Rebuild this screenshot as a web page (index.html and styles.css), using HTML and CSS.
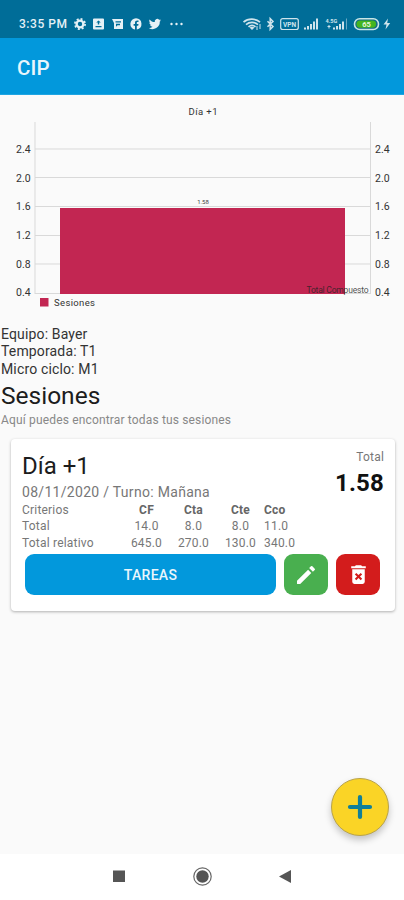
FILE: index.html
```html
<!DOCTYPE html>
<html lang="es">
<head>
    <meta charset="UTF-8">
    <meta name="viewport" content="width=device-width, initial-scale=1">
    <link rel="stylesheet" href="styles.css">
    <title>CIP</title>
</head>
<body>
<div id="statusbar">
    <span class="clock">3:35 PM</span>
    <svg class="notifications" width="112" height="14" viewBox="0 0 112 14" fill="#e6f1f6">
        <!-- ajustes -->
        <circle cx="6" cy="7" r="3.4" fill="none" stroke="#e6f1f6" stroke-width="2.4"/>
        <circle cx="6" cy="7" r="5.1" fill="none" stroke="#e6f1f6" stroke-width="1.7" stroke-dasharray="2 2"/>
        <path fill-rule="evenodd" d="M20 1.5h9a1 1 0 0 1 1 1v9a1 1 0 0 1-1 1h-9a1 1 0 0 1-1-1v-9a1 1 0 0 1 1-1zM24.5 3.4l-2.3 2.2h1.6v2h1.4v-2h1.6zM21.5 9v1.2h6V9z"/>
        <path fill-rule="evenodd" d="M38 2h11v10h-9V6zM41.500 4.300v1.200h5.500V4.300zM42 6.800v3l1.500-1.500H46V6.800z"/>
        <!-- facebook -->
        <path d="M62 1.300a5.700 5.700 0 0 0-1 11.300V8.700h-1.400V7H61V5.800c0-1.600.9-2.400 2.300-2.400h1.200v1.500h-.8c-.7 0-.9.400-.9.900V7h1.700l-.3 1.700h-1.400v3.900A5.700 5.700 0 0 0 62 1.300z"/>
        <!-- twitter -->
        <path d="M87 3.200c-.5.200-.9.300-1.400.4.500-.3.900-.8 1.100-1.400-.5.300-1 .5-1.600.6a2.500 2.500 0 0 0-4.300 2.300c-2.100-.1-4-1.100-5.200-2.700-.7 1.200-.3 2.600.8 3.400-.4 0-.8-.1-1.100-.3 0 1.200.8 2.200 2 2.500-.4.100-.8.100-1.100 0 .3 1 1.200 1.700 2.300 1.800A5.100 5.100 0 0 1 74.800 11a7.200 7.200 0 0 0 11-6.400c.5-.4.900-.8 1.200-1.400z"/>
        <circle cx="97.500" cy="7" r="1.200"/>
        <circle cx="102.500" cy="7" r="1.200"/>
        <circle cx="107.500" cy="7" r="1.200"/>
    </svg>
    <svg class="system" width="150" height="16" viewBox="0 0 150 16" fill="#cfe4ec">
        <!-- wifi -->
        <g fill="none" stroke="#cfe4ec" stroke-width="1.700">
            <path d="M-.5 6.200c4.500-4 12-4 16.500 0M2 8.600c3.500-2.900 8.500-2.900 12 0M4.500 10.800c2.200-1.700 4.800-1.700 7 0"/>
            <path d="M13 10v4M16 8v5" stroke-width="1"/>
        </g>
        <path d="M5.500 11.500L8 14l2.500-2.500c-1.500-1-3.500-1-5 0z"/>
        <!-- bluetooth -->
        <path d="M23.500 5.200l5.500 5.400-2.800 2.800V2.600L29 5.400l-5.500 5.400" fill="none" stroke="#cfe4ec" stroke-width="1.500"/>
        <!-- vpn -->
        <rect x="36.700" y="2.700" width="17.600" height="10.800" rx="2" fill="none" stroke="#cfe4ec" stroke-width="1.200"/>
        <text class="vpn" x="45.500" y="10.600" text-anchor="middle">VPN</text>
        <path d="M60 11.500h2v2h-2zM63 10h2v3.500h-2zM66 8h2v5.500h-2zM69 5.500h2v8h-2zM72 2.500h2v11h-2z"/>
        <!-- datos -->
        <text class="net" x="81.500" y="6.500">4.5G</text>
        <path d="M85 9v3.500M83.500 10.500h3" stroke="#cfe4ec"/>
        <path d="M89 11.500h2v2h-2zM92 10h2v3.500h-2zM95 8h2v5.500h-2zM98 5.500h2v8h-2z"/>
        <path d="M102 2.500h1v11h-1z" opacity=".5"/>
        <!-- bateria -->
        <rect x="110.500" y="2.700" width="24" height="10.800" rx="5.200" fill="#116983" stroke="#c9e6e6" stroke-width="1.600"/>
        <path d="M116 4.500h12.500a3.600 3.600 0 0 1 0 7.200H116a3.600 3.600 0 0 1 0-7.200z" fill="#43b51f"/>
        <text class="charge" x="122.500" y="11" text-anchor="middle">65</text>
        <path d="M144 2.500l-4.500 6h3l-1 5 4.700-6.500h-3z"/>
    </svg>
</div>

<header id="toolbar">CIP</header>

<main id="main">
    <svg id="chart" width="404" height="220" viewBox="0 0 404 220">
        <text class="label" x="188.500" y="20" textLength="29">Día +1</text>
        <g class="grid">
            <path d="M35 54h336M35 82.500h336M35 111.500h336M35 140.500h336M35 169h336M35 198.500h336"/>
            <path d="M35 27v172M370.500 27v172"/>
        </g>
        <rect class="bar" x="60" y="113" width="285" height="86"/>
        <text class="value" x="203" y="108.500" text-anchor="middle">1.58</text>
        <g class="axis">
            <text x="16" y="57.500">2.4</text>
            <text x="16" y="86.500">2.0</text>
            <text x="16" y="115">1.6</text>
            <text x="16" y="144">1.2</text>
            <text x="16" y="172.500">0.8</text>
            <text x="16" y="201">0.4</text>
            <text x="375" y="57.500">2.4</text>
            <text x="375" y="86.500">2.0</text>
            <text x="375" y="115">1.6</text>
            <text x="375" y="144">1.2</text>
            <text x="375" y="172.500">0.8</text>
            <text x="375" y="201">0.4</text>
        </g>
        <text class="description" x="306.500" y="197.500" textLength="62">Total Compuesto</text>
        <rect class="bar" x="40" y="203" width="8.500" height="8.500"/>
        <text class="label" x="54" y="211" textLength="41">Sesiones</text>
    </svg>

    <div id="info">
        <div>Equipo: Bayer</div>
        <div>Temporada: T1</div>
        <div>Micro ciclo: M1</div>
    </div>
    <h1>Sesiones</h1>
    <p class="subtitle">Aquí puedes encontrar todas tus sesiones</p>

    <div class="card">
        <div class="card-head">
            <div>
                <h2>Día +1</h2>
                <div class="date">08/11/2020 / Turno: Mañana</div>
            </div>
            <div class="total">
                <span>Total</span>
                <strong>1.58</strong>
            </div>
        </div>
        <table>
            <tr><td>Criterios</td><th>CF</th><th>Cta</th><th>Cte</th><th class="last">Cco</th></tr>
            <tr><td>Total</td><td>14.0</td><td>8.0</td><td>8.0</td><td class="last">11.0</td></tr>
            <tr><td>Total relativo</td><td>645.0</td><td>270.0</td><td>130.0</td><td class="last">340.0</td></tr>
        </table>
        <div class="actions">
            <button class="tasks">TAREAS</button>
            <button class="edit" aria-label="Editar">
                <svg width="24" height="24" viewBox="0 0 24 24" fill="#fff">
                    <path d="M3 17.800V20.500q0 .5.500.5H6.200L17.300 9.900l-3.200-3.200L3 17.800zM20.710 7.040a1 1 0 0 0 0-1.410l-2.340-2.340a1 1 0 0 0-1.410 0l-1.830 1.830 3.750 3.750 1.830-1.830z"/>
                </svg>
            </button>
            <button class="delete" aria-label="Eliminar">
                <svg width="25" height="25" viewBox="0 0 24 24" fill="#fff">
                    <path d="M6 19a2 2 0 0 0 2 2h8a2 2 0 0 0 2-2V7H6v12zm2.460-7.120l1.410-1.410L12 12.590l2.120-2.120 1.410 1.410L13.410 14l2.120 2.120-1.410 1.410L12 15.410l-2.120 2.120-1.410-1.410L10.590 14l-2.130-2.120zM15.500 4l-1-1h-5l-1 1H5v2h14V4z"/>
                </svg>
            </button>
        </div>
    </div>

    <button id="fab" aria-label="Agregar">
        <svg width="26" height="26" viewBox="0 0 26 26">
            <path d="M13 3v20M3 13h20" stroke="#107f99" stroke-width="4.200" stroke-linecap="round"/>
        </svg>
    </button>
</main>

<nav id="navbar">
    <svg width="404" height="46" viewBox="0 0 404 46" fill="#555">
        <rect x="113" y="16.500" width="12" height="11.500"/>
        <circle cx="202.500" cy="22.500" r="6.200"/>
        <circle cx="202.500" cy="22.500" r="8.700" fill="none" stroke="#666" stroke-width="1.200"/>
        <path d="M279 22.500l12-6.500v13z"/>
    </svg>
</nav>
</body>
</html>
```
FILE: styles.css
```css
body {
    margin: 0;
    height: 900px;
    display: flex;
    flex-direction: column;
    overflow: hidden;
    font-family: Roboto, sans-serif;
    background-color: #fafafa;
    color: #333;
}
svg {
    display: block;
}
button {
    border: 0;
    padding: 0;
    font-family: inherit;
    display: flex;
    align-items: center;
    justify-content: center;
}
#statusbar {
    height: 38px;
    flex: none;
    box-sizing: border-box;
    padding: 10px 10px 0 19px;
    display: flex;
    align-items: center;
    background-color: #006d98;
}
.clock {
    width: 55px;
    font-size: 12px;
    font-weight: 500;
    letter-spacing: 0.55px;
    white-space: nowrap;
    color: #e6f1f6;
}
.system {
    margin-left: auto;
    overflow: visible;
}
.vpn {
    font-size: 6.5px;
    font-weight: 700;
}
.net {
    font-size: 5.5px;
    font-weight: 700;
}
.charge {
    font-size: 7.5px;
    font-weight: 700;
    fill: #e4f5d9;
}
#toolbar {
    height: 57px;
    flex: none;
    box-sizing: border-box;
    padding-left: 17px;
    line-height: 60px;
    font-size: 20.5px;
    font-weight: 500;
    letter-spacing: 0.2px;
    color: #e9f6fc;
    background-color: #0298dc;
    border-bottom: 1px solid #20a5e2;
}
#main {
    flex: 1;
    position: relative;
}

/* grafico */
.label {
    font-size: 9.5px;
    fill: #333;
}
.axis {
    font-size: 10.5px;
    fill: #333;
}
.value {
    font-size: 6px;
    fill: #444;
}
.description {
    font-size: 8.5px;
    fill: #222;
    fill-opacity: 0.8;
}
.grid {
    stroke: #d9d9d9;
}
.bar {
    fill: #c22652;
}

#info {
    margin-top: 10px;
    padding: 1px 0 0 1px;
    font-size: 14px;
    line-height: 17.3px;
    letter-spacing: 0.15px;
}
h1 {
    margin: 3px 0 0 1px;
    font-size: 24.5px;
    font-weight: 400;
    line-height: 30px;
    color: #1c1c1c;
}
.subtitle {
    margin: 1px 0 0 1px;
    font-size: 12px;
    line-height: 16px;
    letter-spacing: 0.16px;
    color: #888;
}
.card {
    margin: 11px 9px 0 11px;
    height: 172px;
    box-sizing: border-box;
    padding: 11px 11px 0;
    background-color: #fff;
    border-radius: 4px;
    box-shadow: 0 1px 3px rgba(0, 0, 0, 0.3);
}
.card-head {
    display: flex;
    justify-content: space-between;
}
h2 {
    margin: 0;
    font-size: 24px;
    font-weight: 400;
    line-height: 32px;
    color: #1c1c1c;
}
.date {
    font-size: 14px;
    line-height: 20px;
    letter-spacing: 0.3px;
    color: #777;
}
.total {
    text-align: right;
    font-size: 12px;
    letter-spacing: 0.2px;
    line-height: 15px;
    color: #777;
}
.total strong {
    display: block;
    font-size: 24px;
    font-weight: 700;
    line-height: 36px;
    color: #111;
}
table {
    table-layout: fixed;
    width: 285px;
    border-collapse: collapse;
    font-size: 12px;
    line-height: 16.5px;
    letter-spacing: 0.2px;
    color: #777;
}
td, th {
    padding: 0;
    width: 47px;
    text-align: center;
    white-space: nowrap;
}
th {
    font-weight: 700;
    color: #666;
}
td:first-child {
    width: 101px;
    text-align: left;
}
.last {
    width: 43px;
    text-align: left;
}
.actions {
    display: flex;
    gap: 8px;
    margin: 3px 4px 0 3px;
}
.actions button {
    height: 41px;
    width: 44px;
    border-radius: 9px;
}
.actions .tasks {
    flex: 1;
    font-size: 14px;
    font-weight: 500;
    letter-spacing: 0.3px;
    color: #e9f6fc;
    background-color: #0298dc;
}
.actions .edit {
    background-color: #49af4f;
}
.actions .delete {
    background-color: #d31c1c;
}
#fab {
    position: absolute;
    right: 15px;
    bottom: 18px;
    width: 58px;
    height: 58px;
    box-sizing: border-box;
    border: 1px solid #b9a34a;
    border-radius: 50%;
    background-color: #fad426;
    box-shadow: 0 4px 7px rgba(0, 0, 0, 0.22);
}
#navbar {
    flex: none;
    height: 46px;
    background-color: #fff;
}
```
